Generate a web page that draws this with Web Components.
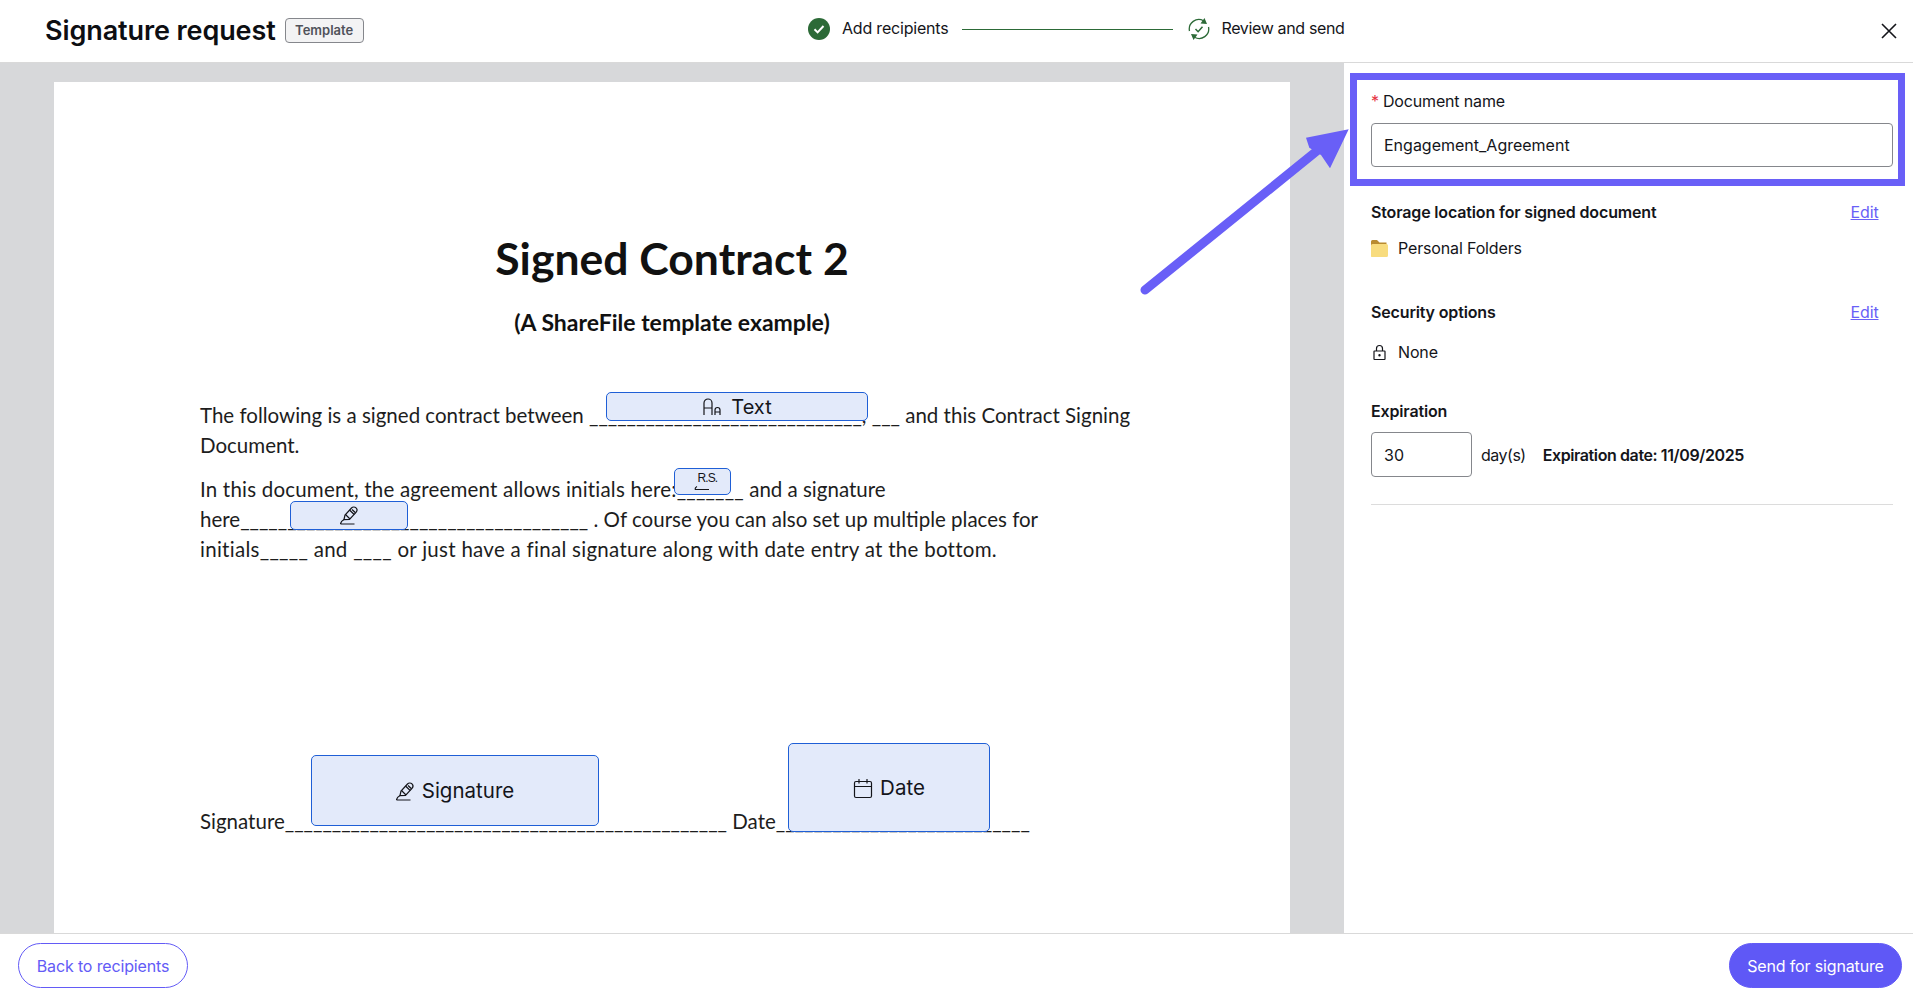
<!DOCTYPE html>
<html lang="en">
<head>
<meta charset="utf-8">
<title>Signature request</title>
<style>
html, body { margin: 0; height: 100%; }
body { font-family: Inter, "Liberation Sans", sans-serif; color: #14151a; overflow: hidden; }
</style>
</head>
<body>
<sig-app>
	<sig-header slot="header"></sig-header>
	<doc-page slot="doc">
		<doc-field slot="fields" x="552" y="310" w="262" h="29" size="20">
			<svg slot="icon" width="22" height="20" viewBox="0 0 22 20" fill="none" stroke="#14151a" stroke-width="1.2"><path d="M2 18V6a4 4 0 0 1 8 0v12M2 11h8"/><path d="M13 18v-5a2.500 2.500 0 0 1 5 0v5M13 15h5"/></svg>
			Text
		</doc-field>
		<doc-field slot="fields" x="620" y="386" w="57" h="27" size="0">
			<initials-mark slot="icon"></initials-mark>
		</doc-field>
		<doc-field slot="fields" x="236" y="419" w="118" h="29" size="0">
			<pen-icon slot="icon"></pen-icon>
		</doc-field>
		<doc-field slot="fields" x="257" y="673" w="288" h="71" size="20.500" pad="2">
			<pen-icon slot="icon"></pen-icon>
			Signature
		</doc-field>
		<doc-field slot="fields" x="734" y="661" w="202" h="89" size="20.500" pad="2">
			<svg slot="icon" width="20" height="21" viewBox="0 0 20 21" fill="none" stroke="#14151a" stroke-width="1.2"><rect x="1.500" y="3.500" width="17" height="16" rx="1.500"/><path d="M1.500 8.500h17M6 1v4.500M14 1v4.500"/></svg>
			Date
		</doc-field>
	</doc-page>
	<side-panel slot="panel"></side-panel>
	<sig-footer slot="footer"></sig-footer>
	<callout-arrow slot="overlay"></callout-arrow>
</sig-app>

<script>
class sigApp extends HTMLElement {
	connectedCallback () {
		this.attachShadow({ mode: 'open' });
		this.shadowRoot.innerHTML = `<style>
			:host { display: grid; grid-template-rows: 63px 1fr 58px; height: 100vh; position: relative; }
			.main { display: grid; grid-template-columns: 1fr 569px; min-height: 0; }
			.stage { background: #d7d8da; padding: 19px 54px 0; overflow: hidden; min-height: 0; }
		</style>
		<slot name="header"></slot>
		<div class="main">
			<div class="stage"><slot name="doc"></slot></div>
			<slot name="panel"></slot>
		</div>
		<slot name="footer"></slot>
		<slot name="overlay"></slot>`;
	}
}

class sigHeader extends HTMLElement {
	connectedCallback () {
		this.attachShadow({ mode: 'open' });
		this.shadowRoot.innerHTML = `<style>
			:host { display: grid; grid-template-columns: 763px 1fr 40px; align-items: center; border-bottom: 1px solid #d9d9d9; background: #fff; padding: 0 16px 0 45px; box-sizing: border-box; height: 63px; }
			.left { display: flex; align-items: center; gap: 9px; }
			h1 { margin: 0; font-size: 27px; line-height: 32px; font-weight: 600; letter-spacing: -.1px; color: #0d0e12; }
			.badge { width: 79px; height: 25px; box-sizing: border-box; display: flex; align-items: center; justify-content: center; border: 1px solid #85878c; border-radius: 4px; background: #f3f3f4; font-size: 13px; font-weight: 600; color: #50525a; margin-top: -2px; }
			.close { justify-self: end; display: block; }
		</style>
		<div class="left"><h1>Signature request</h1><span class="badge">Template</span></div>
		<sig-stepper></sig-stepper>
		<svg class="close" width="16" height="16" viewBox="0 0 16 16" stroke="#14151a" stroke-width="1.6"><path d="M1 1l14 14M15 1L1 15"/></svg>`;
	}
}

class sigStepper extends HTMLElement {
	connectedCallback () {
		this.attachShadow({ mode: 'open' });
		this.shadowRoot.innerHTML = `<style>
			:host { display: flex; align-items: center; height: 22px; font-size: 16px; color: #14151a; margin-top: -4px; }
			svg { display: block; flex: none; }
			span { margin: -3px 0 0 12px; letter-spacing: -.2px; white-space: nowrap; }
			span.last { letter-spacing: -.35px; margin-left: 11px; }
			.line { width: 211px; height: 1px; background: #2c6a37; margin: 1px 15px 0 14px; }
		</style>
		<svg width="22" height="22" viewBox="0 0 22 22"><circle cx="11" cy="11" r="11" fill="#2c6a37"/><path d="M6.500 11.300l3.100 3.100 5.900-6.400" fill="none" stroke="#fff" stroke-width="2"/></svg>
		<span>Add recipients</span>
		<div class="line"></div>
		<svg width="22" height="22" viewBox="0 0 22 22" fill="none" stroke="#2c6a37" stroke-width="1.300"><path d="M1.500 13A9.500 9.500 0 0 1 15.500 2.800"/><path d="M20.500 9A9.500 9.500 0 0 1 6.500 19.200"/><path d="M16.500 0l2.500 6-6.500-.5zM5.500 22L3 16l6.500 .5z" fill="#2c6a37" stroke="none"/><path d="M7.500 11l2.600 2.700 4.400-5" stroke-width="1.500"/></svg>
		<span class="last">Review and send</span>`;
	}
}

class docPage extends HTMLElement {
	connectedCallback () {
		this.attachShadow({ mode: 'open' });
		this.shadowRoot.innerHTML = `<style>
			:host { display: block; position: relative; background: #fff; height: 1000px; padding: 152px 146px 0; box-sizing: border-box; font-family: Lato, "Liberation Sans", sans-serif; color: #1d1d1d; font-size: 20.500px; line-height: 30px; }
			h2 { margin: 0 0 26px; text-align: center; font-size: 44.500px; line-height: 48px; font-weight: 700; color: #111; }
			h3 { margin: 0 0 64px; text-align: center; font-size: 23px; line-height: 28px; font-weight: 700; color: #111; }
			p { margin: 0 0 14px; white-space: nowrap; }
			.last { margin-top: 242px; }
			.wide { letter-spacing: .2px; }
			.wider { letter-spacing: .28px; }
		</style>
		<h2>Signed Contract 2</h2>
		<h3>(A ShareFile template example)</h3>
		<p>The following is a signed contract between _____________________________, ___ and this Contract Signing<br>Document.</p>
		<p><span class="wide">In this document, the agreement allows initials here:_______</span> and a signature<br>here_____________________________________ . Of course you can also set up multiple places for<br><span class="wider">initials_____ and ____ or just have a final signature along with date entry at the bottom.</span></p>
		<p class="last">Signature_______________________________________________ Date___________________________</p>
		<slot name="fields"></slot>`;
	}
}

class docField extends HTMLElement {
	connectedCallback () {
		this.attachShadow({ mode: 'open' });
		const a = n => this.getAttribute(n);
		this.shadowRoot.innerHTML = `<style>
			:host { position: absolute; left: ${a('x')}px; top: ${a('y')}px; width: ${a('w')}px; height: ${a('h')}px; padding-top: ${a('pad') || 0}px; box-sizing: border-box; display: flex; align-items: center; justify-content: center; gap: 7px; background: #e3eafa; border: 1px solid #1f5fd6; border-radius: 5px; font-family: Inter, sans-serif; font-size: ${a('size')}px; line-height: 1; color: #14151a; }
		</style>
		<slot name="icon"></slot><slot></slot>`;
	}
}

class penIcon extends HTMLElement {
	connectedCallback () {
		this.attachShadow({ mode: 'open' });
		this.shadowRoot.innerHTML = `<style>:host { display: block; line-height: 0; }</style>
		<svg width="19" height="19" viewBox="0 0 19 19" fill="none" stroke="#14151a" stroke-width="1.200"><path d="M4 13.500l1-4.500 6.500-7c1.200-1.300 3.300-1.300 4.500-.1s1.200 3.100 0 4.400l-6.500 7z"/><path d="M5.500 8.500l4.500 4.500M9.500 4l4.700 4.500M12 3.500l3.500 3.300"/><path d="M.5 18h14M.5 18c.2-2 1.500-3.500 3.500-4.500"/></svg>`;
	}
}

class initialsMark extends HTMLElement {
	connectedCallback () {
		this.attachShadow({ mode: 'open' });
		this.shadowRoot.innerHTML = `<style>
			:host { display: block; width: 18px; height: 20px; font-family: "Liberation Sans", sans-serif; }
			span { display: block; font-size: 12px; line-height: 13px; letter-spacing: -.9px; padding-left: 4px; color: #14151a; }
			svg { display: block; margin-top: -1px; }
		</style>
		<span>R.S.</span>
		<svg width="16" height="7" viewBox="0 0 16 7" fill="none" stroke="#14151a" stroke-width="1.200"><path d="M1 5.500h14M1 5.500c0-1.500 .8-2.500 2-3"/></svg>`;
	}
}

class sidePanel extends HTMLElement {
	connectedCallback () {
		this.attachShadow({ mode: 'open' });
		this.shadowRoot.innerHTML = `<style>
			:host { display: block; background: #fff; padding: 10px 20.500px 0 27px; font-size: 16px; color: #14151a; letter-spacing: -.15px; min-height: 0; }
			.name { position: relative; padding-top: 18px; height: 95px; }
			.name::before { content: ""; position: absolute; left: -21px; right: -12.500px; top: 0; bottom: 0; border: 7px solid #695ff7; }
			label { display: block; line-height: 20px; margin-bottom: 12px; }
			label i { font-style: normal; color: #e5333f; margin-right: 4px; }
			.box { border: 1px solid #85878c; border-radius: 4px; box-sizing: border-box; display: flex; align-items: center; padding-left: 12px; font-size: 16px; background: #fff; letter-spacing: 0; }
			.doc { height: 44px; position: relative; }
			.sec { display: flex; justify-content: space-between; font-weight: 600; line-height: 20px; margin-right: 14px; }
			a { color: #695ff7; font-weight: 400; text-decoration: underline; }
			.row { display: flex; align-items: center; gap: 10px; line-height: 20px; }
			.row svg { display: block; width: 17px; flex: none; }
			.s1 { margin-top: 16px; }
			.r1 { margin-top: 16px; }
			.s2 { margin-top: 44px; }
			.r2 { margin-top: 20px; }
			.s3 { margin-top: 39px; }
			.exp { display: flex; align-items: center; margin-top: 11px; }
			.num { width: 101px; height: 45px; margin-right: 9px; }
			.exp span { letter-spacing: -.5px; }
			.exp b { font-weight: 600; margin-left: 17px; letter-spacing: -.4px; }
			hr { border: 0; border-top: 1px solid #dcdcdc; margin: 27px 0 0; }
		</style>
		<div class="name">
			<label><i>*</i>Document name</label>
			<div class="box doc">Engagement_Agreement</div>
		</div>
		<div class="sec s1"><span>Storage location for signed document</span><a href="#">Edit</a></div>
		<div class="row r1">
			<svg height="17" viewBox="0 0 17 17"><path d="M0 1.500A1.500 1.500 0 0 1 1.500 0h4.500L8.500 2.500h7V8H0z" fill="#b98b2f"/><path d="M0 16.500V5.500A1.500 1.500 0 0 1 1.500 4h14A1.500 1.500 0 0 1 17 5.500v10A1.500 1.500 0 0 1 15.500 17H.5z" fill="#f8dc7e"/></svg>
			<span>Personal Folders</span>
		</div>
		<div class="sec s2"><span>Security options</span><a href="#">Edit</a></div>
		<div class="row r2">
			<svg height="17" viewBox="0 0 17 17" fill="none" stroke="#14151a" stroke-width="1.200"><rect x="3" y="7" width="11" height="8.500" rx=".5"/><path d="M5.500 7V4.500a3 3 0 0 1 6 0V7"/><circle cx="8.500" cy="11.300" r=".6" fill="#14151a"/></svg>
			<span>None</span>
		</div>
		<div class="sec s3"><span>Expiration</span></div>
		<div class="exp">
			<div class="box num">30</div>
			<span>day(s)</span>
			<b>Expiration date: 11/09/2025</b>
		</div>
		<hr>`;
	}
}

class pillButton extends HTMLElement {
	connectedCallback () {
		this.attachShadow({ mode: 'open' });
		this.shadowRoot.innerHTML = `<style>
			:host { display: block; }
			button { display: block; height: 45px; border-radius: 23px; border: 1px solid #635bf6; background: #fff; color: #635bf6; font: 400 16px Inter, sans-serif; letter-spacing: -.15px; padding: 0; width: 100%; }
			:host([primary]) button { background: #5f58f6; color: #fff; }
		</style>
		<button><slot></slot></button>`;
	}
}

class sigFooter extends HTMLElement {
	connectedCallback () {
		this.attachShadow({ mode: 'open' });
		this.shadowRoot.innerHTML = `<style>
			:host { display: flex; justify-content: space-between; align-items: flex-start; border-top: 1px solid #d9d9d9; background: #fff; padding: 9px 11px 0 18px; box-sizing: border-box; }
			.back { width: 170px; }
			.send { width: 173px; }
		</style>
		<pill-button class="back">Back to recipients</pill-button>
		<pill-button class="send" primary>Send for signature</pill-button>`;
	}
}

class calloutArrow extends HTMLElement {
	connectedCallback () {
		this.attachShadow({ mode: 'open' });
		this.shadowRoot.innerHTML = `<style>
			:host { position: absolute; left: 1130px; top: 115px; pointer-events: none; }
			svg { display: block; }
		</style>
		<svg width="230" height="190" viewBox="1130 115 230 190">
			<path d="M1145 290L1318 150" stroke="#695ff7" stroke-width="9" stroke-linecap="round" fill="none"/>
			<path d="M1348.700 129.300L1306 137.700L1309.300 147.700L1321 155L1330 168.300z" fill="#695ff7"/>
		</svg>`;
	}
}

customElements.define('initials-mark', initialsMark);
customElements.define('pen-icon', penIcon);
customElements.define('doc-field', docField);
customElements.define('doc-page', docPage);
customElements.define('sig-stepper', sigStepper);
customElements.define('sig-header', sigHeader);
customElements.define('side-panel', sidePanel);
customElements.define('pill-button', pillButton);
customElements.define('sig-footer', sigFooter);
customElements.define('callout-arrow', calloutArrow);
customElements.define('sig-app', sigApp);
</script>
</body>
</html>
